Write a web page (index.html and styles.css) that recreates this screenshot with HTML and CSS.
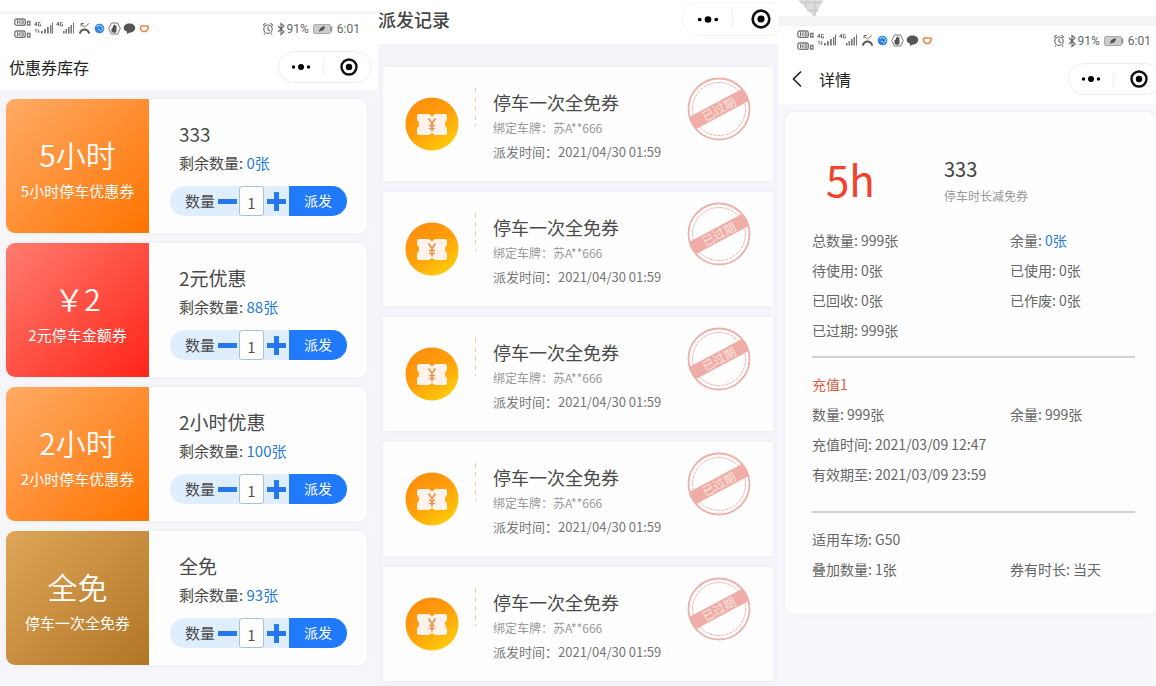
FILE: index.html
```html
<!DOCTYPE html>
<html lang="zh-CN">
<head>
<meta charset="utf-8">
<title>停车优惠券</title>
<meta name="viewport" content="width=device-width, initial-scale=1">
<link rel="stylesheet" href="styles.css">
</head>
<body>
<svg class="defs" width="0" height="0" aria-hidden="true">
  <defs>
    <linearGradient id="gold" x1="0.1" y1="0" x2="0.8" y2="1"><stop offset="0" stop-color="#ff8a10"/><stop offset="0.5" stop-color="#ff9f0a"/><stop offset="1" stop-color="#ffcf0a"/></linearGradient>
    <symbol id="signals" viewBox="0 0 136 24">
      <g fill="none" stroke="#777" stroke-width="1.3">
        <rect x="0.8" y="2" width="10.5" height="6.4" rx="2"/><rect x="0.8" y="14" width="10.5" height="6.4" rx="2"/>
        <path d="M3.5 3v4.5M6 3v4.5M3.5 5.2H6M8 3.5v3.6h1q1.500-1.800 0-3.600zM3.500 15v4.500M6 15v4.500M3.500 17.200H6M8 15.500v3.600h1q1.500-1.800 0-3.600z" stroke-width="1"/>
        <path d="M13.500 8V4.500h2.500V8zM13.500 20v-3.500h2.500V20z" stroke-width="1.300"/>
      </g>
      <g fill="none" stroke="#777" stroke-width="1">
        <path d="M22.500 9V5l-2 2.700h3M26.500 5.500h-2V9h2V7.200M44.500 9V5l-2 2.700h3M48.500 5.500h-2V9h2V7.200"/>
        <path d="M22 12v3.500M24.500 12v3.500M21 13.200l1-1.200 1 1.200M23.500 14.500l1 1.200 1-1.200" stroke-width="0.800"/>
      </g>
      <path fill="#777" d="M27 14h1.800v2.500H27zM30 12h1.800v4.500H30zM33 10h1.800v6.500H33zM36 8h1.400v8.500H36zM38 5.500h1v11h-1zM49 14h1.600v2.500H49zM51.500 12h1.600v4.500h-1.600zM54 10h1.600v6.500H54zM56.500 8H58v8.500h-1.500zM59 5.500h1v11h-1z"/>
      <path d="M65.500 16.500l2-3q3-2 6 0l2 3" fill="none" stroke="#555" stroke-width="2"/>
      <path d="M67 7l3.500 3 4.500-3.500M67 9.500V6.500h3" fill="none" stroke="#777" stroke-width="1"/>
      <circle cx="85.500" cy="11.500" r="4.800" fill="#2d84e3"/><path d="M82.500 9.500q3-2.500 5.500 0t-2 5M84 12.500h2" stroke="#b7d9fa" fill="none"/>
      <path d="M97.500 6h6l2.800 5.500-2.800 5.500h-6l-2.800-5.500z" fill="#fff" stroke="#777" stroke-width="1"/>
      <path d="M97.500 14.500V11l1.500-.5v-2h1v-1h1v1h1.500v6l-1 1.200H99z" fill="#555"/>
      <path d="M115.500 6.500c3.500 0 5.700 1.900 5.700 4.400s-2.500 4.500-5.400 4.500l-3 1.600.2-2.300c-2-.8-3.300-2-3.300-3.800 0-2.500 2.400-4.400 5.800-4.400z" fill="#555"/>
      <path d="M127.500 9h6q1.500 1 0 3.500l-1.700 2h-3l-2-2q-1-2.500.7-3.500z" fill="none" stroke="#ed8448" stroke-width="1.600"/>
    </symbol>
    <symbol id="alarm" viewBox="0 0 24 14"><g fill="none" stroke="#666" stroke-width="1.100"><circle cx="6" cy="7.200" r="4.200"/><path d="M6 4.500v3l2 1.500M1 3.500L3.500 1.200M11 3.500L8.500 1.200M2.800 11.500l-1 1.200M9.200 11.500l1 1.200M16 4l6 6-3 2.500V1.500L22 4l-6 6"/></g></symbol>
    <symbol id="battery" viewBox="0 0 20 10"><rect x=".5" y=".5" width="17" height="9" rx="1.500" fill="#ccc" stroke="#aaa"/><path d="M18.500 2.500v5" stroke="#888" stroke-width="1.500"/><path d="M6 8q0-5 6-6 0 5-4.500 5z" fill="#555"/></symbol>
    <symbol id="more" viewBox="0 0 20 8"><circle cx="10" cy="4" r="3"/><circle cx="2.500" cy="4" r="1.700"/><circle cx="17.500" cy="4" r="1.700"/></symbol>
    <symbol id="target" viewBox="0 0 18 18"><circle cx="9" cy="9" r="7.500" fill="none" stroke="#111" stroke-width="2.400"/><circle cx="9" cy="9" r="3.200"/></symbol>
    <symbol id="ticket" viewBox="0 0 54 54">
      <circle cx="27" cy="27" r="26.500" fill="url(#gold)"/>
      <path d="M14 17h10l3 2.500 3-2.500h10q2 0 2 2v4q-2 1-2 4t2 4v5q0 2-2 2H30l-3-2-3 2H14q-2 0-2-2v-5q2-1 2-4t-2-4v-4q0-2 2-2z" fill="#fff3ec"/>
      <path d="M23.500 21.500l3.500 5 3.500-5M27 26.500v8M24 28.500h6M24 31.500h6" fill="none" stroke="#e8924c" stroke-width="1.600"/>
    </symbol>
    <symbol id="stamp" viewBox="0 0 64 64">
      <g fill="none" stroke="#eeb0ab"><circle cx="32" cy="32" r="30.500" stroke-width="1.800"/><circle cx="32" cy="32" r="26.500" stroke-dasharray="3 1"/></g>
      <g transform="rotate(-28 32 32)"><path d="M2 25h60q1.500 7 0 14H2q-1.500-7 0-14z" fill="#f0aca6"/><text x="32" y="36.500" text-anchor="middle" class="stamp-text">已过期</text></g>
    </symbol>
  </defs>
</svg>

<main class="screens">
  <section class="screen stock">
    <div class="strip"></div>
    <div class="status"><svg class="signals"><use href="#signals"/></svg><span class="status-right"><svg class="alarm"><use href="#alarm"/></svg><span>91%</span><svg class="battery"><use href="#battery"/></svg><span class="clock">6:01</span></span></div>
    <header class="bar"><h1>优惠券库存</h1><div class="capsule"><button aria-label="更多"><svg class="more"><use href="#more"/></svg></button><button aria-label="关闭"><svg class="target"><use href="#target"/></svg></button></div></header>
    <div class="coupons">
      <article class="coupon">
        <div class="face orange"><strong>5小时</strong><span>5小时停车优惠券</span></div>
        <div class="info"><h2>333</h2><p>剩余数量: <b>0张</b></p>
          <form class="stepper"><label for="q1">数量</label><button type="button" class="minus" aria-label="减少"></button><input id="q1" value="1"><button type="button" class="plus" aria-label="增加"></button><button type="button" class="send">派发</button></form></div>
      </article>
      <article class="coupon">
        <div class="face red"><strong>￥2</strong><span>2元停车金额券</span></div>
        <div class="info"><h2>2元优惠</h2><p>剩余数量: <b>88张</b></p>
          <form class="stepper"><label for="q2">数量</label><button type="button" class="minus" aria-label="减少"></button><input id="q2" value="1"><button type="button" class="plus" aria-label="增加"></button><button type="button" class="send">派发</button></form></div>
      </article>
      <article class="coupon">
        <div class="face orange"><strong>2小时</strong><span>2小时停车优惠券</span></div>
        <div class="info"><h2>2小时优惠</h2><p>剩余数量: <b>100张</b></p>
          <form class="stepper"><label for="q3">数量</label><button type="button" class="minus" aria-label="减少"></button><input id="q3" value="1"><button type="button" class="plus" aria-label="增加"></button><button type="button" class="send">派发</button></form></div>
      </article>
      <article class="coupon">
        <div class="face brown"><strong>全免</strong><span>停车一次全免券</span></div>
        <div class="info"><h2>全免</h2><p>剩余数量: <b>93张</b></p>
          <form class="stepper"><label for="q4">数量</label><button type="button" class="minus" aria-label="减少"></button><input id="q4" value="1"><button type="button" class="plus" aria-label="增加"></button><button type="button" class="send">派发</button></form></div>
      </article>
    </div>
  </section>

  <section class="screen records">
    <header class="bar"><h1>派发记录</h1><div class="capsule"><button aria-label="更多"><svg class="more"><use href="#more"/></svg></button><button aria-label="关闭"><svg class="target"><use href="#target"/></svg></button></div></header>
    <div class="record-list">
      <article class="record"><svg class="ticket"><use href="#ticket"/></svg><div class="record-text"><h2>停车一次全免券</h2><p class="plate">绑定车牌：苏A**666</p><p class="time">派发时间：2021/04/30 01:59</p></div><svg class="stamp"><use href="#stamp"/></svg></article>
      <article class="record"><svg class="ticket"><use href="#ticket"/></svg><div class="record-text"><h2>停车一次全免券</h2><p class="plate">绑定车牌：苏A**666</p><p class="time">派发时间：2021/04/30 01:59</p></div><svg class="stamp"><use href="#stamp"/></svg></article>
      <article class="record"><svg class="ticket"><use href="#ticket"/></svg><div class="record-text"><h2>停车一次全免券</h2><p class="plate">绑定车牌：苏A**666</p><p class="time">派发时间：2021/04/30 01:59</p></div><svg class="stamp"><use href="#stamp"/></svg></article>
      <article class="record"><svg class="ticket"><use href="#ticket"/></svg><div class="record-text"><h2>停车一次全免券</h2><p class="plate">绑定车牌：苏A**666</p><p class="time">派发时间：2021/04/30 01:59</p></div><svg class="stamp"><use href="#stamp"/></svg></article>
      <article class="record"><svg class="ticket"><use href="#ticket"/></svg><div class="record-text"><h2>停车一次全免券</h2><p class="plate">绑定车牌：苏A**666</p><p class="time">派发时间：2021/04/30 01:59</p></div><svg class="stamp"><use href="#stamp"/></svg></article>
    </div>
  </section>

  <section class="screen detail">
    <div class="top"><svg width="25" height="16" viewBox="0 0 25 16"><path d="M0 0h25L17 16h-2z" fill="#dcdcdc"/><path d="M8 0v8M17 0v16M2 2.500h22M9 10.500h11" stroke="#c4c4c4" fill="none"/></svg></div>
    <div class="strip"></div>
    <div class="status"><svg class="signals"><use href="#signals"/></svg><span class="status-right"><svg class="alarm"><use href="#alarm"/></svg><span>91%</span><svg class="battery"><use href="#battery"/></svg><span class="clock">6:01</span></span></div>
    <header class="bar"><button class="back" aria-label="返回"><svg width="12" height="18" viewBox="0 0 12 18"><path d="M10 1.500L2.500 9l7.500 7.500" fill="none" stroke="#222" stroke-width="1.600"/></svg></button><h1>详情</h1><div class="capsule"><button aria-label="更多"><svg class="more"><use href="#more"/></svg></button><button aria-label="关闭"><svg class="target"><use href="#target"/></svg></button></div></header>
    <article class="sheet">
      <div class="summary"><strong>5h</strong><div><h2>333</h2><p>停车时长减免券</p></div></div>
      <div class="facts"><p>总数量: 999张</p><p>余量: <b>0张</b></p><p>待使用: 0张</p><p>已使用: 0张</p><p>已回收: 0张</p><p>已作废: 0张</p><p>已过期: 999张</p></div>
      <hr>
      <h3>充值1</h3>
      <div class="facts"><p>数量: 999张</p><p>余量: 999张</p><p class="wide">充值时间: 2021/03/09 12:47</p><p class="wide">有效期至: 2021/03/09 23:59</p></div>
      <hr class="second">
      <div class="facts"><p class="wide">适用车场: G50</p><p>叠加数量: 1张</p><p>券有时长: 当天</p></div>
    </article>
  </section>
</main>
</body>
</html>
```
FILE: styles.css
```css
* { box-sizing: border-box; }
body, h1, h2, h3, p { margin: 0; }
body {
  font-family: "Noto Sans CJK SC", sans-serif;
  color: #4a4a4a;
  background: #f4f5fa;
}
button, input { font: inherit; padding: 0; border: 0; background: none; }
svg { display: block; flex: none; }
.defs { position: absolute; }

.screens {
  display: grid;
  grid-template-columns: 189fr 200fr 189fr;
  height: 100vh;
  overflow: hidden;
}
.screen { min-width: 0; overflow: hidden; background: #f6f6fa; }
.strip { background: #f4f4f4; }

/* Phone status bar */
.status {
  display: flex;
  justify-content: space-between;
  align-items: center;
  height: 30px;
  background: #fff;
  padding: 0 18px 0 14px;
}
.signals { width: 136px; height: 24px; }
.status-right {
  display: flex;
  align-items: center;
  font: 12px/14px Roboto, sans-serif;
  color: #666;
}
.alarm { width: 24px; height: 14px; margin-right: 1px; }
.battery { width: 20px; height: 10px; margin: 0 4px; }

/* Title bar and capsule */
.bar {
  display: flex;
  align-items: center;
  height: 46px;
  padding: 0 6px 0 9px;
  background: #fff;
}
.bar h1 { font-size: 16px; line-height: 24px; font-weight: 400; color: #222; }
.capsule {
  display: flex;
  flex: none;
  width: 94px;
  height: 32px;
  margin-left: auto;
  border: 1px solid #eee;
  border-radius: 16px;
}
.capsule button { flex: 1; display: flex; align-items: center; justify-content: center; }
.capsule button + button { position: relative; padding-left: 4px; }
.capsule button + button::before {
  content: "";
  position: absolute;
  left: 0;
  top: 7px;
  bottom: 7px;
  border-left: 1px solid #eee;
}
.more { width: 20px; height: 8px; }
.target { width: 18px; height: 18px; }

/* Coupon stock */
.stock { background: #f6f6fa; }
.stock .strip { height: 14px; background: linear-gradient(#fff 11px, #f4f4f4 11px); }
.coupons { display: grid; gap: 10px; padding: 9px 11px 20px 6px; }
.coupon {
  display: grid;
  grid-template-columns: 144fr 217fr;
  min-height: 134px;
  border-radius: 9px;
  overflow: hidden;
  background: #fefefe;
  box-shadow: 0 0 4px #ececf0;
}
.face {
  display: flex;
  flex-direction: column;
  align-items: center;
  justify-content: center;
  gap: 5px;
  padding-top: 5px;
  color: #fff;
}
.face strong { font-size: 30px; line-height: 40px; font-weight: 350; }
.face span { font-size: 15px; line-height: 24px; }
.orange { background: linear-gradient(135deg, #ffab66, #ff7300); }
.red { background: linear-gradient(135deg, #ff7c70, #ff2418); }
.brown { background: linear-gradient(135deg, #dfa658, #b27526); }
.info { padding: 21px 20px 16px 30px; }
.info h2 { font-size: 19px; line-height: 28px; font-weight: 400; }
.info p { margin-top: 3px; font-size: 15px; line-height: 24px; }
.info b { font-weight: 400; color: #2a7bd6; }
.stepper {
  display: flex;
  align-items: center;
  width: 177px;
  height: 30px;
  margin: 11px 0 0 -9px;
  padding-left: 15px;
  border-radius: 15px;
  overflow: hidden;
  background: #dfeefd;
  font-size: 15px;
}
.stepper label { width: 33px; padding-bottom: 2px; }
.minus, .plus { width: 19px; height: 19px; }
.minus { background: linear-gradient(#2578ee, #2578ee) center / 19px 5px no-repeat; }
.plus {
  background:
    linear-gradient(#2578ee, #2578ee) center / 19px 5px no-repeat,
    linear-gradient(#2578ee, #2578ee) center / 5px 19px no-repeat;
}
.stepper input {
  width: 25px;
  height: 30px;
  margin: 0 3px 0 2px;
  padding-top: 2px;
  border: 1px solid #abc3cf;
  border-radius: 3px;
  background: #fff;
  color: #555;
  text-align: center;
}
.send {
  flex: 1;
  align-self: stretch;
  margin-left: 3px;
  padding-bottom: 2px;
  background: #2179fc;
  color: #fff;
  font-size: 14px;
}

/* Dispatch records */
.records { background: #f4f4fa; }
.records .bar { height: 44px; padding: 0 0 6px; }
.records .bar h1 { font-size: 18px; font-weight: 500; color: #444; }
.records .capsule { width: 104px; height: 34px; margin-right: -8px; border-radius: 17px; border-color: #f4f4f4; }
.records .capsule .more { width: 22px; height: 9px; }
.records .capsule .target { width: 20px; height: 20px; }
.record-list { display: grid; gap: 11px; padding: 23px 5px 11px; }
.record {
  display: flex;
  align-items: center;
  min-height: 114px;
  padding: 0 22px;
  background: #fefefe;
  box-shadow: 0 0 4px #ececf4;
}
.ticket { width: 54px; height: 54px; }
.record-text {
  flex: 1;
  margin-left: 16px;
  padding: 3px 0 0 18px;
  background: repeating-linear-gradient(#e9cf9f 0 5px, #fff 5px 9px) 0 3px / 1px 38px no-repeat;
}
.record h2 { font-size: 18px; line-height: 28px; font-weight: 400; }
.plate { font-size: 12px; line-height: 24px; color: #999; }
.time { font-size: 13px; line-height: 24px; color: #777; white-space: nowrap; }
.stamp { width: 64px; height: 64px; margin-bottom: 30px; }
.stamp-text { font-size: 12px; fill: #fbe3dc; }

/* Coupon detail */
.detail { background: #f6f7fb; }
.top { height: 16px; padding-left: 20px; background: #fff; }
.detail .strip { height: 10px; }
.detail .status { padding: 0 5px 0 19px; }
.detail .bar { height: 48px; padding: 0 0 2px 13px; }
.detail .bar h1 { margin-left: 16px; }
.detail .capsule { margin-right: -6px; }
.sheet {
  margin: 8px 0 0 7px;
  padding: 36px 21px 30px 27px;
  border-radius: 9px;
  background: #fefefe;
  box-shadow: 0 0 4px #ececf2;
  font-size: 14px;
  line-height: 30px;
  color: #666;
}
.summary { display: grid; grid-template-columns: 132fr 191fr; padding-bottom: 13px; }
.summary strong { padding-left: 14px; font-size: 42px; line-height: 62px; font-weight: 400; color: #f5402c; }
.summary h2 { padding-top: 6px; font-size: 20px; line-height: 30px; font-weight: 400; color: #444; }
.summary p { padding-bottom: 4px; font-size: 12px; line-height: 24px; color: #999; }
.facts { display: grid; grid-template-columns: 198fr 125fr; }
.facts b { font-weight: 400; color: #2a7bd6; }
.wide { grid-column: 1 / -1; }
.sheet hr { height: 2px; margin: 11px 0; border: 0; background: #d2d2d2; }
.sheet .second { margin-top: 22px; }
.sheet h3 { font-size: 14px; line-height: 30px; font-weight: 400; color: #db5d43; }
```
